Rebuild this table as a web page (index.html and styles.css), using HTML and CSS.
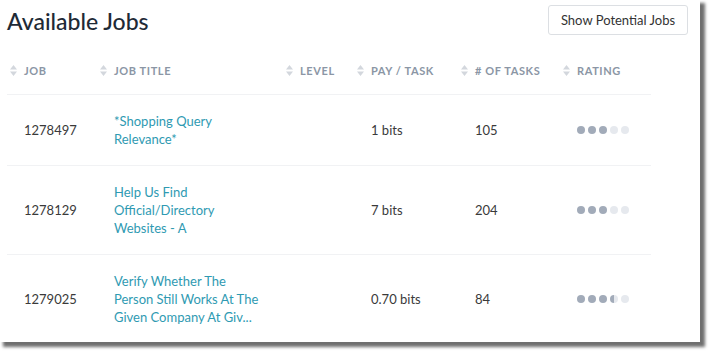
FILE: index.html
```html
<!DOCTYPE html>
<html>
<head>
<meta charset="utf-8">
<link rel="stylesheet" href="styles.css">
</head>
<body>
<div class="card">
  <div class="topbar">
    <h1 class="title">Available Jobs</h1>
    <button class="btn">Show Potential Jobs</button>
  </div>
  <div class="table">
    <div class="row head">
      <div class="th"><svg class="sort" viewBox="0 0 7 11"><path d="M3.5 0L7 4.5H0Z M3.5 11L7 6.5H0Z" fill="#d3d7dd"/></svg>JOB</div>
      <div class="th"><svg class="sort" viewBox="0 0 7 11"><path d="M3.5 0L7 4.5H0Z M3.5 11L7 6.5H0Z" fill="#d3d7dd"/></svg>JOB TITLE</div>
      <div class="th"><svg class="sort" viewBox="0 0 7 11"><path d="M3.5 0L7 4.5H0Z M3.5 11L7 6.5H0Z" fill="#d3d7dd"/></svg>LEVEL</div>
      <div class="th"><svg class="sort" viewBox="0 0 7 11"><path d="M3.5 0L7 4.5H0Z M3.5 11L7 6.5H0Z" fill="#d3d7dd"/></svg>PAY / TASK</div>
      <div class="th"><svg class="sort" viewBox="0 0 7 11"><path d="M3.5 0L7 4.5H0Z M3.5 11L7 6.5H0Z" fill="#d3d7dd"/></svg># OF TASKS</div>
      <div class="th"><svg class="sort" viewBox="0 0 7 11"><path d="M3.5 0L7 4.5H0Z M3.5 11L7 6.5H0Z" fill="#d3d7dd"/></svg>RATING</div>
    </div>
    <div class="row">
      <div class="td">1278497</div>
      <div class="td"><a class="link">*Shopping Query Relevance*</a></div>
      <div class="td"></div>
      <div class="td">1 bits</div>
      <div class="td">105</div>
      <div class="td"><span class="dots"><i class="dot on"></i><i class="dot on"></i><i class="dot on"></i><i class="dot"></i><i class="dot"></i></span></div>
    </div>
    <div class="row">
      <div class="td">1278129</div>
      <div class="td"><a class="link">Help Us Find Official/Directory Websites - A</a></div>
      <div class="td"></div>
      <div class="td">7 bits</div>
      <div class="td">204</div>
      <div class="td"><span class="dots"><i class="dot on"></i><i class="dot on"></i><i class="dot on"></i><i class="dot"></i><i class="dot"></i></span></div>
    </div>
    <div class="row last">
      <div class="td">1279025</div>
      <div class="td"><a class="link">Verify Whether The Person Still Works At The Given Company At Giv...</a></div>
      <div class="td"></div>
      <div class="td">0.70 bits</div>
      <div class="td">84</div>
      <div class="td"><span class="dots"><i class="dot on"></i><i class="dot on"></i><i class="dot on"></i><i class="dot half"></i><i class="dot"></i></span></div>
    </div>
  </div>
</div>
</body>
</html>
```
FILE: styles.css
```css
* { box-sizing: border-box; }
html, body { margin: 0; padding: 0; background: #fff; }
body {
  font-family: Lato, "Open Sans", sans-serif;
  color: #333;
  min-height: 358px;
  padding-bottom: 16px;
}

.card {
  width: 700px;
  height: 342px;
  background: #fff;
  padding: 0 0 0 7px;
  box-shadow: 4px 4px 3px 1px #6f6f6f;
  overflow: hidden;
}

.topbar {
  display: flex;
  align-items: flex-start;
  justify-content: space-between;
  padding-right: 12px;
  height: 50px;
}
.title {
  margin: 6px 0 0 0;
  font-size: 23px;
  line-height: 30px;
  font-weight: 500;
  color: #1e2a36;
}
.btn {
  margin-top: 5px;
  height: 30px;
  width: 140px;
  background: #fff;
  border: 1px solid #dcdfe3;
  border-radius: 3px;
  font-family: Lato, sans-serif;
  font-size: 13px;
  color: #333;
  padding: 0;
}

.table { width: 644px; }
.row {
  display: grid;
  grid-template-columns: 90px 186px 71px 104px 102px 91px;
  border-bottom: 1px solid #f1f2f4;
  align-items: center;
}
.row.last { border-bottom: none; }
.head { height: 45px; padding-bottom: 4px; }
.th {
  display: flex;
  align-items: center;
  padding-left: 3px;
  font-size: 11px;
  font-weight: 700;
  letter-spacing: 0.6px;
  color: #8b96a5;
  white-space: nowrap;
}
.sort { width: 7px; height: 11px; margin-right: 7px; flex: none; }
.td {
  padding: 17px 0 17px 17px;
  font-size: 13px;
  line-height: 18px;
  color: #3a3a3a;
}
.link {
  display: block;
  width: 150px;
  color: #2f9ab2;
}
.dots { display: flex; gap: 3px; }
.dot {
  width: 8px;
  height: 8px;
  border-radius: 50%;
  background: #e6e9ee;
}
.dot.on { background: #a2abb9; }
.dot.half { background: linear-gradient(90deg, #a2abb9 50%, #e6e9ee 50%); }
```
